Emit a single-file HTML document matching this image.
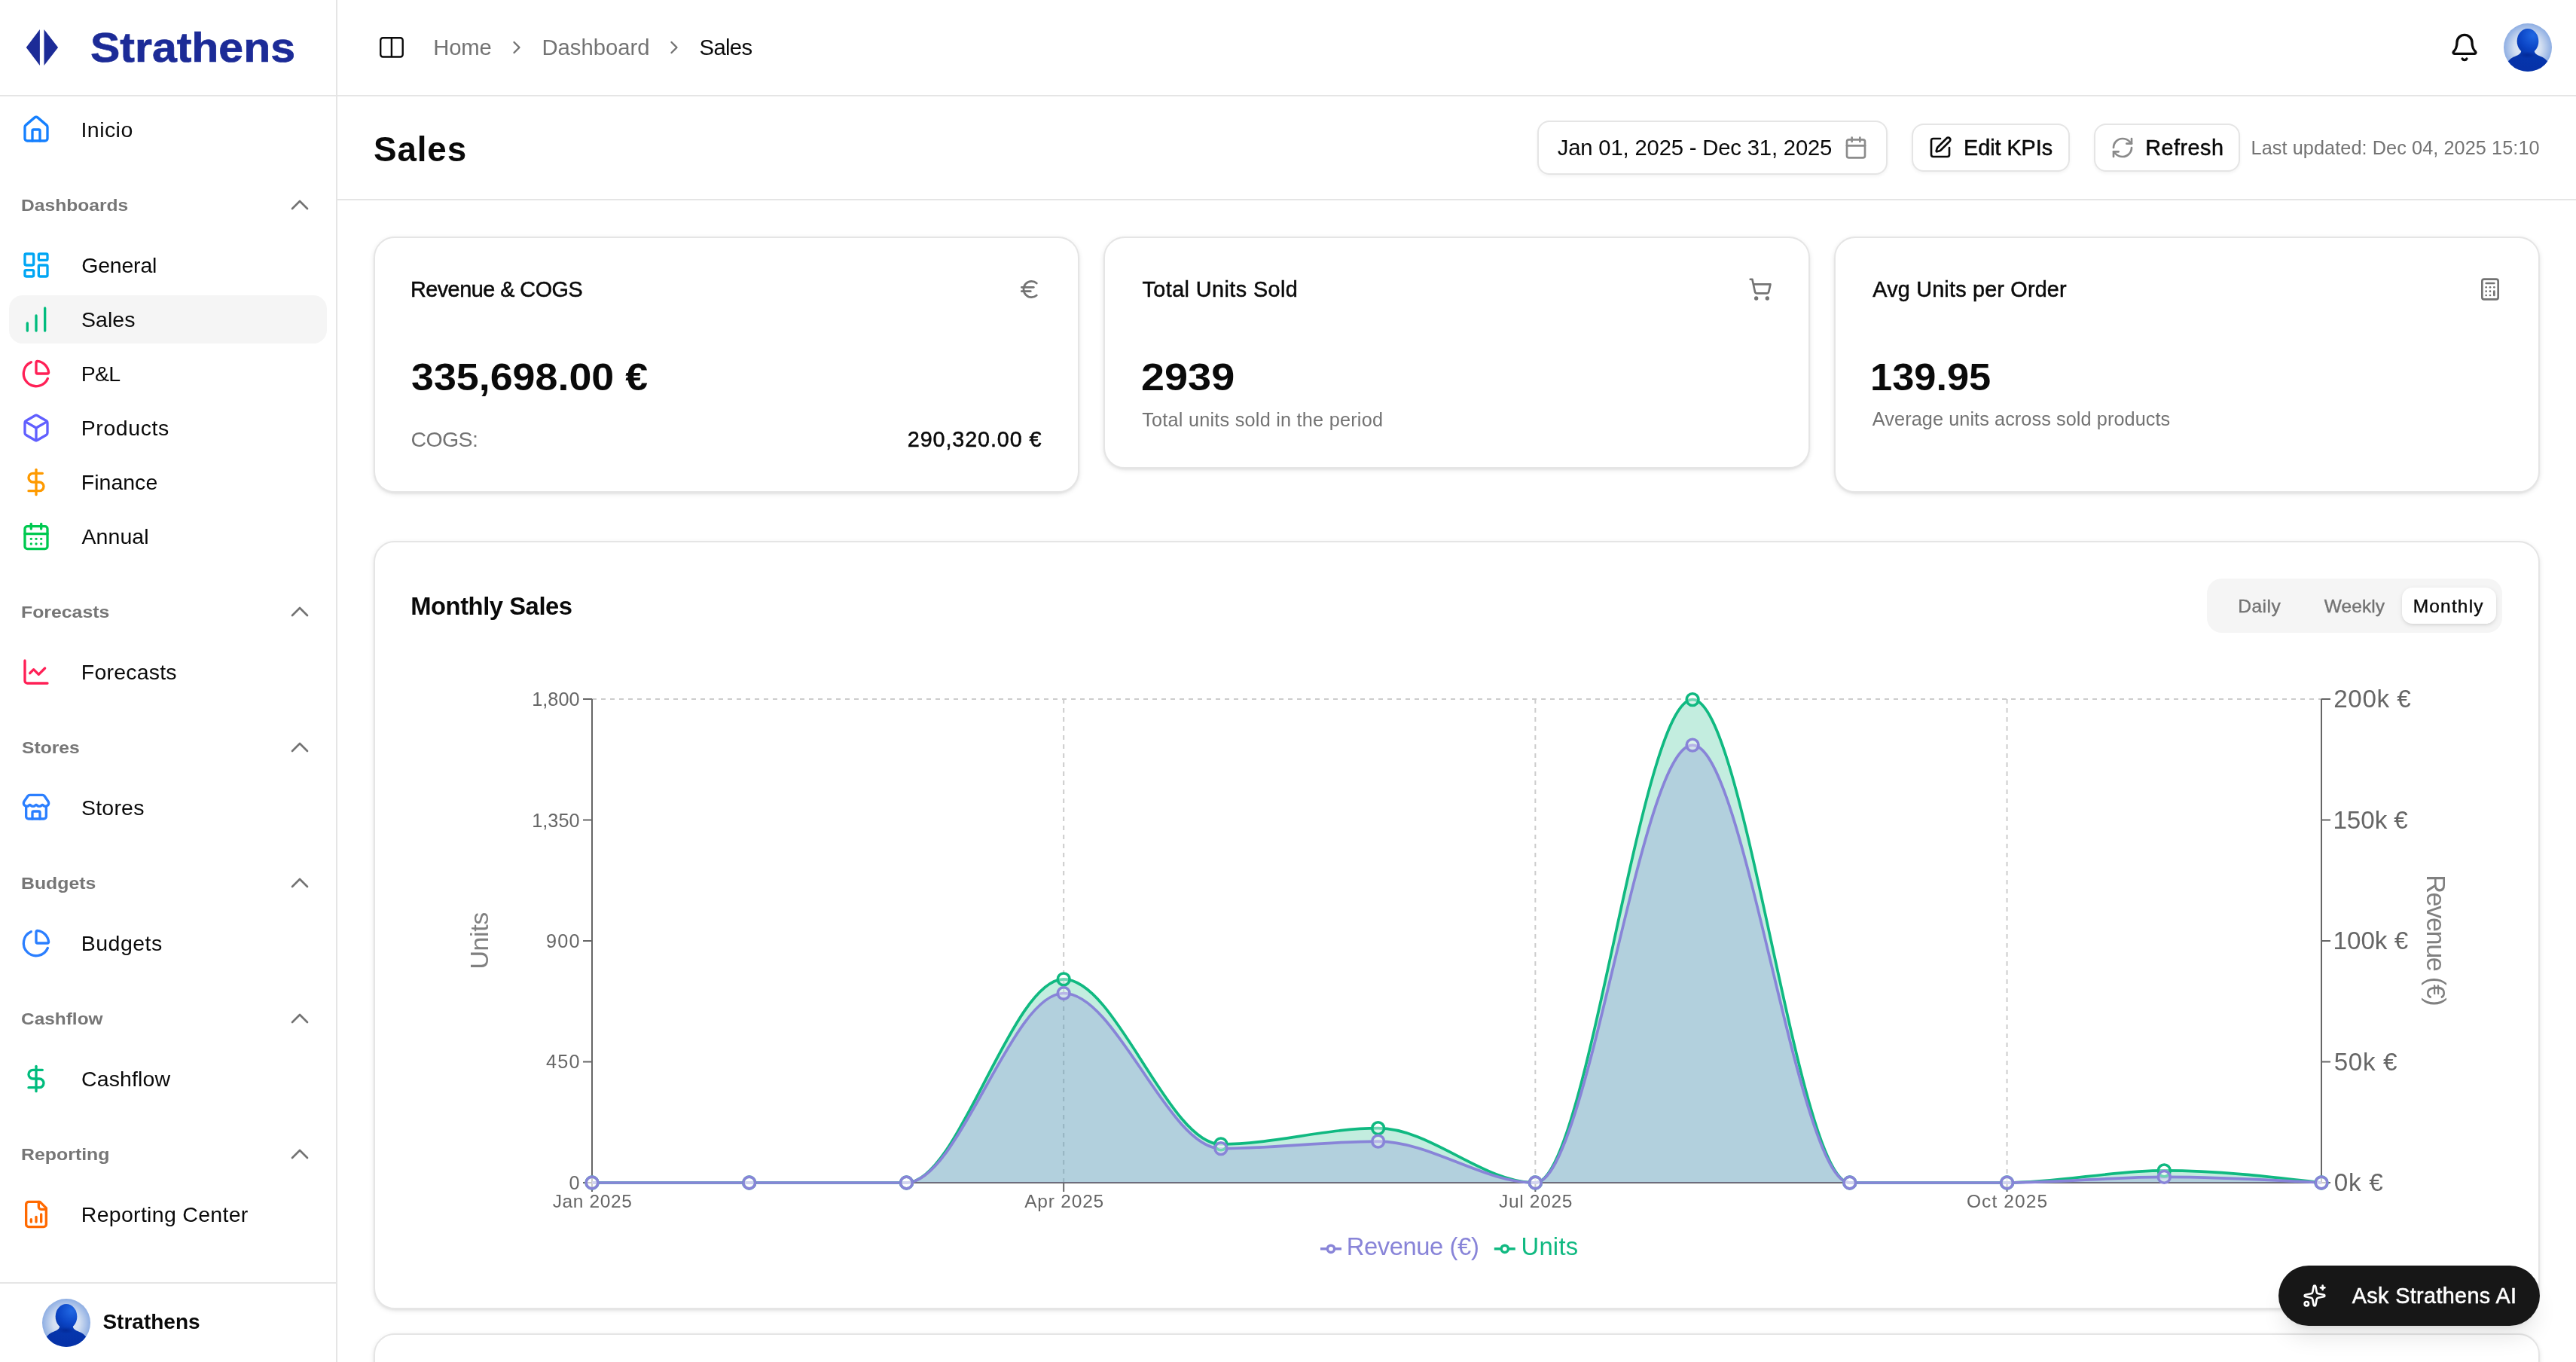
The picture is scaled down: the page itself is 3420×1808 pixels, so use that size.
<!DOCTYPE html>
<html lang="en"><head><meta charset="utf-8"><title>Sales - Strathens</title><style>
*{box-sizing:border-box;margin:0;padding:0}
html,body{width:3420px;height:1808px;overflow:hidden;background:#fff}
#root{position:absolute;left:0;top:0;width:3420px;height:1808px;overflow:hidden;transform:translateZ(0)}
body{position:relative;font-family:"Liberation Sans",sans-serif;-webkit-font-smoothing:antialiased}
.t{position:absolute;white-space:nowrap;display:block}
.i{position:absolute;display:block;overflow:visible}
.sb{position:absolute;left:0;top:0;width:448px;height:1808px;border-right:2px solid #e5e5e5}
.hl{position:absolute;height:2px;background:#e5e5e5}
.act{position:absolute;left:12px;width:422px;height:64px;border-radius:18px;background:#f5f5f5}
.btn{position:absolute;border:2px solid #e5e5e5;background:#fff;box-shadow:0 2px 4px rgba(0,0,0,.05)}
.card{position:absolute;border:2px solid #e5e5e5;border-radius:28px;background:#fff;box-shadow:0 2px 6px rgba(0,0,0,.10),0 2px 4px -2px rgba(0,0,0,.10)}
.tabs{position:absolute;left:2930px;top:768px;width:392px;height:72px;border-radius:20px;background:#f5f5f5}
.pill{position:absolute;left:3189px;top:780px;width:125px;height:48px;border-radius:14px;background:#fff;box-shadow:0 2px 6px rgba(0,0,0,.10),0 2px 4px -2px rgba(0,0,0,.10)}
.ask{position:absolute;left:3025px;top:1680px;width:347px;height:80px;border-radius:40px;background:#171717;box-shadow:0 20px 30px -6px rgba(0,0,0,.10),0 8px 12px -8px rgba(0,0,0,.10)}
</style></head><body>
<div id="root">
<div class="sb"></div>
<div class="hl" style="left:0;top:126px;width:3420px"></div>
<div class="hl" style="left:448px;top:264px;width:2972px"></div>
<div class="hl" style="left:0;top:1702px;width:446px"></div>
<aside>
<svg class="i" style="left:34px;top:38px" width="44" height="50" viewBox="34 38 44 50"><path d="M52.900 38.900 L52.900 87.100 L34.750 63 Z" fill="#1c2b97"/><path d="M58.500 38.900 L58.500 87.100 L77.100 63 Z" fill="#1c2b97"/></svg>
<span class="t" style="left:119.69px;top:36px;font-size:55.50px;line-height:55.50px;color:#1c2b97;font-weight:700;transform-origin:0 50%;transform:scaleX(1.0623);-webkit-text-stroke:0.7px #1c2b97;">Strathens</span>
<svg class="i" style="left:28px;top:152px;" width="40" height="40" viewBox="0 0 24 24" fill="none" stroke="#1580ff" stroke-width="2" stroke-linecap="round" stroke-linejoin="round"><path d="M15 21v-8a1 1 0 0 0-1-1h-4a1 1 0 0 0-1 1v8"/><path d="M3 10a2 2 0 0 1 .709-1.528l7-5.999a2 2 0 0 1 2.582 0l7 5.999A2 2 0 0 1 21 10v9a2 2 0 0 1-2 2H5a2 2 0 0 1-2-2z"/></svg>
<span class="t" style="left:107.48px;top:158px;font-size:28.50px;line-height:28.50px;color:#0a0a0a;letter-spacing:0.450px;">Inicio</span>
<span class="t" style="left:27.68px;top:261px;font-size:22.75px;line-height:22.75px;color:#767676;font-weight:700;transform-origin:0 50%;transform:scaleX(1.0816);">Dashboards</span>
<svg class="i" style="left:378px;top:252px;" width="40" height="40" viewBox="0 0 24 24" fill="none" stroke="#737373" stroke-width="1.6" stroke-linecap="round" stroke-linejoin="round"><path d="m18 15-6-6-6 6"/></svg>
<svg class="i" style="left:28px;top:332px;" width="40" height="40" viewBox="0 0 24 24" fill="none" stroke="#00a6f4" stroke-width="2" stroke-linecap="round" stroke-linejoin="round"><rect width="7" height="9" x="3" y="3" rx="1"/><rect width="7" height="5" x="14" y="3" rx="1"/><rect width="7" height="9" x="14" y="12" rx="1"/><rect width="7" height="5" x="3" y="16" rx="1"/></svg>
<span class="t" style="left:108.28px;top:338px;font-size:28.50px;line-height:28.50px;color:#0a0a0a;letter-spacing:-0.216px;">General</span>
<div class="act" style="top:392px"></div>
<svg class="i" style="left:28px;top:404px;" width="40" height="40" viewBox="0 0 24 24" fill="none" stroke="#00bc7d" stroke-width="2" stroke-linecap="round" stroke-linejoin="round"><path d="M5 21v-6"/><path d="M12 21V9"/><path d="M19 21V3"/></svg>
<span class="t" style="left:108.02px;top:410px;font-size:28.50px;line-height:28.50px;color:#0a0a0a;letter-spacing:0.028px;">Sales</span>
<svg class="i" style="left:28px;top:476px;" width="40" height="40" viewBox="0 0 24 24" fill="none" stroke="#ff2056" stroke-width="2" stroke-linecap="round" stroke-linejoin="round"><path d="M21 12c.552 0 1.005-.449.95-.998a10 10 0 0 0-8.953-8.951c-.55-.055-.998.398-.998.95v8a1 1 0 0 0 1 1z"/><path d="M21.21 15.89A10 10 0 1 1 8 2.83"/></svg>
<span class="t" style="left:107.76px;top:482px;font-size:28.50px;line-height:28.50px;color:#0a0a0a;letter-spacing:-0.697px;">P&amp;L</span>
<svg class="i" style="left:28px;top:548px;" width="40" height="40" viewBox="0 0 24 24" fill="none" stroke="#615fff" stroke-width="2" stroke-linecap="round" stroke-linejoin="round"><path d="M21 8a2 2 0 0 0-1-1.730l-7-4a2 2 0 0 0-2 0l-7 4A2 2 0 0 0 3 8v8a2 2 0 0 0 1 1.730l7 4a2 2 0 0 0 2 0l7-4A2 2 0 0 0 21 16Z"/><path d="m3.300 7 8.700 5 8.700-5"/><path d="M12 22V12"/></svg>
<span class="t" style="left:107.76px;top:554px;font-size:28.50px;line-height:28.50px;color:#0a0a0a;letter-spacing:0.583px;">Products</span>
<svg class="i" style="left:28px;top:620px;" width="40" height="40" viewBox="0 0 24 24" fill="none" stroke="#fe9a00" stroke-width="2" stroke-linecap="round" stroke-linejoin="round"><line x1="12" x2="12" y1="2" y2="22"/><path d="M17 5H9.500a3.500 3.500 0 0 0 0 7h5a3.500 3.500 0 0 1 0 7H6"/></svg>
<span class="t" style="left:107.76px;top:626px;font-size:28.50px;line-height:28.50px;color:#0a0a0a;letter-spacing:0.015px;">Finance</span>
<svg class="i" style="left:28px;top:692px;" width="40" height="40" viewBox="0 0 24 24" fill="none" stroke="#00c950" stroke-width="2" stroke-linecap="round" stroke-linejoin="round"><path d="M8 2v4"/><path d="M16 2v4"/><rect width="18" height="18" x="3" y="4" rx="2"/><path d="M3 10h18"/><path d="M8 14h.01"/><path d="M12 14h.01"/><path d="M16 14h.01"/><path d="M8 18h.01"/><path d="M12 18h.01"/><path d="M16 18h.01"/></svg>
<span class="t" style="left:108.54px;top:698px;font-size:28.50px;line-height:28.50px;color:#0a0a0a;letter-spacing:0.059px;">Annual</span>
<span class="t" style="left:27.66px;top:801px;font-size:22.75px;line-height:22.75px;color:#767676;font-weight:700;transform-origin:0 50%;transform:scaleX(1.0915);">Forecasts</span>
<svg class="i" style="left:378px;top:792px;" width="40" height="40" viewBox="0 0 24 24" fill="none" stroke="#737373" stroke-width="1.6" stroke-linecap="round" stroke-linejoin="round"><path d="m18 15-6-6-6 6"/></svg>
<svg class="i" style="left:28px;top:872px;" width="40" height="40" viewBox="0 0 24 24" fill="none" stroke="#ff2056" stroke-width="2" stroke-linecap="round" stroke-linejoin="round"><path d="M3 3v16a2 2 0 0 0 2 2h16"/><path d="m19 9-5 5-4-4-3 3"/></svg>
<span class="t" style="left:107.76px;top:878px;font-size:28.50px;line-height:28.50px;color:#0a0a0a;letter-spacing:0.217px;">Forecasts</span>
<span class="t" style="left:28.61px;top:981px;font-size:22.75px;line-height:22.75px;color:#767676;font-weight:700;transform-origin:0 50%;transform:scaleX(1.0828);">Stores</span>
<svg class="i" style="left:378px;top:972px;" width="40" height="40" viewBox="0 0 24 24" fill="none" stroke="#737373" stroke-width="1.6" stroke-linecap="round" stroke-linejoin="round"><path d="m18 15-6-6-6 6"/></svg>
<svg class="i" style="left:28px;top:1052px;" width="40" height="40" viewBox="0 0 24 24" fill="none" stroke="#2b7fff" stroke-width="2" stroke-linecap="round" stroke-linejoin="round"><path d="M15 21v-5a1 1 0 0 0-1-1h-4a1 1 0 0 0-1 1v5"/><path d="M17.774 10.310a1.120 1.120 0 0 0-1.549 0 2.500 2.500 0 0 1-3.451 0 1.120 1.120 0 0 0-1.548 0 2.500 2.500 0 0 1-3.452 0 1.120 1.120 0 0 0-1.549 0 2.500 2.500 0 0 1-3.770-3.248l2.889-4.184A2 2 0 0 1 7 2h10a2 2 0 0 1 1.653.873l2.895 4.192a2.500 2.500 0 0 1-3.774 3.244"/><path d="M4 10.950V19a2 2 0 0 0 2 2h12a2 2 0 0 0 2-2v-8.050"/></svg>
<span class="t" style="left:108.02px;top:1058px;font-size:28.50px;line-height:28.50px;color:#0a0a0a;letter-spacing:0.207px;">Stores</span>
<span class="t" style="left:27.66px;top:1161px;font-size:22.75px;line-height:22.75px;color:#767676;font-weight:700;transform-origin:0 50%;transform:scaleX(1.0905);">Budgets</span>
<svg class="i" style="left:378px;top:1152px;" width="40" height="40" viewBox="0 0 24 24" fill="none" stroke="#737373" stroke-width="1.6" stroke-linecap="round" stroke-linejoin="round"><path d="m18 15-6-6-6 6"/></svg>
<svg class="i" style="left:28px;top:1232px;" width="40" height="40" viewBox="0 0 24 24" fill="none" stroke="#2b7fff" stroke-width="2" stroke-linecap="round" stroke-linejoin="round"><path d="M21 12c.552 0 1.005-.449.95-.998a10 10 0 0 0-8.953-8.951c-.55-.055-.998.398-.998.95v8a1 1 0 0 0 1 1z"/><path d="M21.21 15.89A10 10 0 1 1 8 2.83"/></svg>
<span class="t" style="left:107.76px;top:1238px;font-size:28.50px;line-height:28.50px;color:#0a0a0a;letter-spacing:0.478px;">Budgets</span>
<span class="t" style="left:28.30px;top:1341px;font-size:22.75px;line-height:22.75px;color:#767676;font-weight:700;transform-origin:0 50%;transform:scaleX(1.0737);">Cashflow</span>
<svg class="i" style="left:378px;top:1332px;" width="40" height="40" viewBox="0 0 24 24" fill="none" stroke="#737373" stroke-width="1.6" stroke-linecap="round" stroke-linejoin="round"><path d="m18 15-6-6-6 6"/></svg>
<svg class="i" style="left:28px;top:1412px;" width="40" height="40" viewBox="0 0 24 24" fill="none" stroke="#00bc7d" stroke-width="2" stroke-linecap="round" stroke-linejoin="round"><line x1="12" x2="12" y1="2" y2="22"/><path d="M17 5H9.500a3.500 3.500 0 0 0 0 7h5a3.500 3.500 0 0 1 0 7H6"/></svg>
<span class="t" style="left:108.08px;top:1418px;font-size:28.50px;line-height:28.50px;color:#0a0a0a;letter-spacing:0.110px;">Cashflow</span>
<span class="t" style="left:27.66px;top:1521px;font-size:22.75px;line-height:22.75px;color:#767676;font-weight:700;transform-origin:0 50%;transform:scaleX(1.0939);">Reporting</span>
<svg class="i" style="left:378px;top:1512px;" width="40" height="40" viewBox="0 0 24 24" fill="none" stroke="#737373" stroke-width="1.6" stroke-linecap="round" stroke-linejoin="round"><path d="m18 15-6-6-6 6"/></svg>
<svg class="i" style="left:28px;top:1592px;" width="40" height="40" viewBox="0 0 24 24" fill="none" stroke="#ff6900" stroke-width="2" stroke-linecap="round" stroke-linejoin="round"><path d="M15 2H6a2 2 0 0 0-2 2v16a2 2 0 0 0 2 2h12a2 2 0 0 0 2-2V7Z"/><path d="M14 2v4a2 2 0 0 0 2 2h4"/><path d="M8 18v-2"/><path d="M12 18v-4"/><path d="M16 18v-6"/></svg>
<span class="t" style="left:107.76px;top:1598px;font-size:28.50px;line-height:28.50px;color:#0a0a0a;letter-spacing:0.303px;">Reporting Center</span>
<svg class="i" style="left:56px;top:1724px" width="64" height="64" viewBox="0 0 64 64"><defs><radialGradient id="ag" cx="50%" cy="50%" r="50%"><stop offset="0" stop-color="#eef2f9"/><stop offset="0.55" stop-color="#d3dff1"/><stop offset="1" stop-color="#8eaee3"/></radialGradient><radialGradient id="ah" gradientUnits="userSpaceOnUse" cx="39" cy="16" r="44"><stop offset="0" stop-color="#2168e3"/><stop offset="0.4" stop-color="#0b45c6"/><stop offset="0.62" stop-color="#0536ad"/><stop offset="1" stop-color="#0632a8"/></radialGradient><radialGradient id="as" cx="50%" cy="50%" r="50%"><stop offset="0" stop-color="#011f86" stop-opacity="0.55"/><stop offset="1" stop-color="#011f86" stop-opacity="0"/></radialGradient><clipPath id="ac"><circle cx="32" cy="32" r="32"/></clipPath></defs><circle cx="32" cy="32" r="32" fill="url(#ag)"/><g clip-path="url(#ac)" fill="url(#ah)"><ellipse cx="32" cy="23.700" rx="14.350" ry="16.600"/><path d="M23.500 34 C23.500 40 21 41.500 14.700 44 C9.500 46.200 6 49 4 54 L4 66 L60 66 L60 54 C58 49 54.500 46.200 49.300 44 C43 41.500 40.500 40 40.500 34 Z"/><ellipse cx="31.500" cy="42" rx="11" ry="4.500" fill="url(#as)"/></g></svg>
<span class="t" style="left:136.42px;top:1741px;font-size:28.00px;line-height:28.00px;color:#0a0a0a;font-weight:700;letter-spacing:0.007px;">Strathens</span>
</aside>
<header>
<svg class="i" style="left:504px;top:49px" width="32" height="28" viewBox="0 0 32 28" fill="none" stroke="#0a0a0a" stroke-width="2.400"><rect x="1.200" y="1.200" width="29.500" height="25.300" rx="3.200"/><path d="M15.900 1.200v25.300"/></svg>
<span class="t" style="left:575.20px;top:49px;font-size:29.25px;line-height:29.25px;color:#737373;letter-spacing:-0.114px;">Home</span>
<svg class="i" style="left:671.7px;top:49px;" width="28" height="28" viewBox="0 0 24 24" fill="none" stroke="#737373" stroke-width="2" stroke-linecap="round" stroke-linejoin="round"><path d="m9 18 6-6-6-6"/></svg>
<span class="t" style="left:719.40px;top:49px;font-size:29.25px;line-height:29.25px;color:#737373;letter-spacing:0.010px;">Dashboard</span>
<svg class="i" style="left:880.8px;top:49px;" width="28" height="28" viewBox="0 0 24 24" fill="none" stroke="#737373" stroke-width="2" stroke-linecap="round" stroke-linejoin="round"><path d="m9 18 6-6-6-6"/></svg>
<span class="t" style="left:928.58px;top:49px;font-size:29.25px;line-height:29.25px;color:#0a0a0a;letter-spacing:-0.676px;">Sales</span>
<svg class="i" style="left:3252px;top:43px;" width="40" height="40" viewBox="0 0 24 24" fill="none" stroke="#0a0a0a" stroke-width="2" stroke-linecap="round" stroke-linejoin="round"><path d="M10.268 21a2 2 0 0 0 3.464 0"/><path d="M3.262 15.326A1 1 0 0 0 4 17h16a1 1 0 0 0 .740-1.673C19.410 13.956 18 12.499 18 8A6 6 0 0 0 6 8c0 4.499-1.411 5.956-2.738 7.326"/></svg>
<svg class="i" style="left:3324px;top:31px" width="64" height="64" viewBox="0 0 64 64"><defs><radialGradient id="bg" cx="50%" cy="50%" r="50%"><stop offset="0" stop-color="#eef2f9"/><stop offset="0.55" stop-color="#d3dff1"/><stop offset="1" stop-color="#8eaee3"/></radialGradient><radialGradient id="bh" gradientUnits="userSpaceOnUse" cx="39" cy="16" r="44"><stop offset="0" stop-color="#2168e3"/><stop offset="0.4" stop-color="#0b45c6"/><stop offset="0.62" stop-color="#0536ad"/><stop offset="1" stop-color="#0632a8"/></radialGradient><radialGradient id="bs" cx="50%" cy="50%" r="50%"><stop offset="0" stop-color="#011f86" stop-opacity="0.55"/><stop offset="1" stop-color="#011f86" stop-opacity="0"/></radialGradient><clipPath id="bc"><circle cx="32" cy="32" r="32"/></clipPath></defs><circle cx="32" cy="32" r="32" fill="url(#bg)"/><g clip-path="url(#bc)" fill="url(#bh)"><ellipse cx="32" cy="23.700" rx="14.350" ry="16.600"/><path d="M23.500 34 C23.500 40 21 41.500 14.700 44 C9.500 46.200 6 49 4 54 L4 66 L60 66 L60 54 C58 49 54.500 46.200 49.300 44 C43 41.500 40.500 40 40.500 34 Z"/><ellipse cx="31.500" cy="42" rx="11" ry="4.500" fill="url(#bs)"/></g></svg>
</header>
<main>
<section>
<span class="t" style="left:496.12px;top:176px;font-size:45.75px;line-height:45.75px;color:#0a0a0a;font-weight:700;letter-spacing:0.864px;">Sales</span>
<div class="btn" style="left:2041px;top:160px;width:465px;height:72px;border-radius:16px"></div>
<span class="t" style="left:2067.76px;top:182px;font-size:29.25px;line-height:29.25px;color:#0a0a0a;letter-spacing:-0.173px;">Jan 01, 2025 - Dec 31, 2025</span>
<svg class="i" style="left:2448px;top:180px;" width="32" height="32" viewBox="0 0 24 24" fill="none" stroke="#8c8c8c" stroke-width="2" stroke-linecap="round" stroke-linejoin="round"><path d="M8 2v4"/><path d="M16 2v4"/><rect width="18" height="18" x="3" y="4" rx="2"/><path d="M3 10h18"/></svg>
<div class="btn" style="left:2538px;top:164px;width:210px;height:64px;border-radius:16px"></div>
<svg class="i" style="left:2560px;top:180px;" width="32" height="32" viewBox="0 0 24 24" fill="none" stroke="#0a0a0a" stroke-width="2" stroke-linecap="round" stroke-linejoin="round"><path d="M12 3H5a2 2 0 0 0-2 2v14a2 2 0 0 0 2 2h14a2 2 0 0 0 2-2v-7"/><path d="M18.375 2.625a1 1 0 0 1 3 3l-9.013 9.014a2 2 0 0 1-.853.505l-2.873.840a.500.500 0 0 1-.620-.620l.840-2.873a2 2 0 0 1 .506-.852z"/></svg>
<span class="t" style="left:2607.04px;top:182px;font-size:28.75px;line-height:28.75px;color:#0a0a0a;letter-spacing:-0.032px;-webkit-text-stroke:0.5px #0a0a0a;">Edit KPIs</span>
<div class="btn" style="left:2780px;top:164px;width:194px;height:64px;border-radius:16px"></div>
<svg class="i" style="left:2802px;top:180px;" width="32" height="32" viewBox="0 0 24 24" fill="none" stroke="#8a8a8a" stroke-width="2" stroke-linecap="round" stroke-linejoin="round"><path d="M3 12a9 9 0 0 1 9-9 9.750 9.750 0 0 1 6.740 2.740L21 8"/><path d="M21 3v5h-5"/><path d="M21 12a9 9 0 0 1-9 9 9.750 9.750 0 0 1-6.740-2.740L3 16"/><path d="M8 16H3v5"/></svg>
<span class="t" style="left:2848.14px;top:182px;font-size:28.75px;line-height:28.75px;color:#0a0a0a;letter-spacing:0.522px;-webkit-text-stroke:0.5px #0a0a0a;">Refresh</span>
<span class="t" style="left:2988.53px;top:184px;font-size:25.25px;line-height:25.25px;color:#737373;letter-spacing:0.086px;">Last updated: Dec 04, 2025 15:10</span>
</section>
<section>
<div class="card" style="left:496px;top:314px;width:937.33px;height:340px"></div>
<div class="card" style="left:1465.33px;top:314px;width:937.33px;height:308px"></div>
<div class="card" style="left:2434.67px;top:314px;width:937.33px;height:340px"></div>
<span class="t" style="left:544.94px;top:370px;font-size:28.75px;line-height:28.75px;color:#0a0a0a;letter-spacing:-0.481px;-webkit-text-stroke:0.5px #0a0a0a;">Revenue &amp; COGS</span>
<svg class="i" style="left:1351.3px;top:368px;" width="32" height="32" viewBox="0 0 24 24" fill="none" stroke="#737373" stroke-width="2" stroke-linecap="round" stroke-linejoin="round"><path d="M4 10h12"/><path d="M4 14h9"/><path d="M19 6a7.700 7.700 0 0 0-5.200-2A7.900 7.900 0 0 0 6 12c0 4.400 3.500 8 7.800 8 2 0 3.800-.800 5.200-2"/></svg>
<span class="t" style="left:545.62px;top:477px;font-size:49.75px;line-height:49.75px;color:#0a0a0a;font-weight:700;transform-origin:0 50%;transform:scaleX(1.0813);">335,698.00 €</span>
<span class="t" style="left:545.38px;top:569px;font-size:28.50px;line-height:28.50px;color:#737373;letter-spacing:-0.561px;">COGS:</span>
<span class="t" style="left:1204.76px;top:569px;font-size:28.75px;line-height:28.75px;color:#0a0a0a;letter-spacing:0.888px;-webkit-text-stroke:0.5px #0a0a0a;">290,320.00 €</span>
<span class="t" style="left:1516.57px;top:370px;font-size:28.75px;line-height:28.75px;color:#0a0a0a;letter-spacing:0.428px;-webkit-text-stroke:0.5px #0a0a0a;">Total Units Sold</span>
<svg class="i" style="left:2320.7px;top:368px;" width="32" height="32" viewBox="0 0 24 24" fill="none" stroke="#737373" stroke-width="2" stroke-linecap="round" stroke-linejoin="round"><circle cx="8" cy="21" r="1"/><circle cx="19" cy="21" r="1"/><path d="M2.050 2.050h2l2.660 12.420a2 2 0 0 0 2 1.580h9.780a2 2 0 0 0 1.950-1.570l1.650-7.430H5.120"/></svg>
<span class="t" style="left:1514.80px;top:477px;font-size:49.75px;line-height:49.75px;color:#0a0a0a;font-weight:700;transform-origin:0 50%;transform:scaleX(1.1222);">2939</span>
<span class="t" style="left:1516.14px;top:545px;font-size:25.25px;line-height:25.25px;color:#737373;letter-spacing:0.237px;">Total units sold in the period</span>
<span class="t" style="left:2486.34px;top:370px;font-size:28.75px;line-height:28.75px;color:#0a0a0a;letter-spacing:0.210px;-webkit-text-stroke:0.5px #0a0a0a;">Avg Units per Order</span>
<svg class="i" style="left:3290px;top:368px;" width="32" height="32" viewBox="0 0 24 24" fill="none" stroke="#737373" stroke-width="2" stroke-linecap="round" stroke-linejoin="round"><rect width="16" height="20" x="4" y="2" rx="2"/><line x1="8" x2="16" y1="6" y2="6"/><line x1="16" x2="16" y1="14" y2="18"/><path d="M16 10h.01"/><path d="M12 10h.01"/><path d="M8 10h.01"/><path d="M12 14h.01"/><path d="M8 14h.01"/><path d="M12 18h.01"/><path d="M8 18h.01"/></svg>
<span class="t" style="left:2482.65px;top:477px;font-size:49.75px;line-height:49.75px;color:#0a0a0a;font-weight:700;transform-origin:0 50%;transform:scaleX(1.0532);">139.95</span>
<span class="t" style="left:2485.85px;top:544px;font-size:25.25px;line-height:25.25px;color:#737373;letter-spacing:0.086px;">Average units across sold products</span>
</section>
<section>
<div class="card" style="left:496px;top:718px;width:2876px;height:1020px"></div>
<span class="t" style="left:545.24px;top:789px;font-size:32.75px;line-height:32.75px;color:#0a0a0a;font-weight:700;letter-spacing:-0.452px;">Monthly Sales</span>
<div class="tabs"></div><div class="pill"></div>
<span class="t" style="left:2971.19px;top:793px;font-size:24.50px;line-height:24.50px;color:#737373;letter-spacing:0.522px;-webkit-text-stroke:0.4px #737373;">Daily</span>
<span class="t" style="left:3085.70px;top:793px;font-size:24.50px;line-height:24.50px;color:#737373;letter-spacing:0.111px;-webkit-text-stroke:0.4px #737373;">Weekly</span>
<span class="t" style="left:3203.69px;top:793px;font-size:24.50px;line-height:24.50px;color:#0a0a0a;letter-spacing:1.177px;-webkit-text-stroke:0.4px #0a0a0a;">Monthly</span>
<svg class="i" style="left:0;top:0" width="3420" height="1808" viewBox="0 0 3420 1808"><g stroke="#cccccc" stroke-width="2" stroke-dasharray="6 6" fill="none"><path d="M786.0,928.0H3082.0"/><path d="M1412.18,928.0V1570.0"/><path d="M2038.36,928.0V1570.0"/><path d="M2664.55,928.0V1570.0"/></g><path d="M786.00,1570.00C855.58,1570.00,925.15,1570.00,994.73,1570.00C1064.30,1570.00,1133.88,1570.00,1203.45,1570.00C1273.03,1570.00,1342.61,1299.90,1412.18,1299.90C1481.76,1299.90,1551.33,1518.90,1620.91,1518.90C1690.48,1518.90,1760.06,1497.70,1829.64,1497.70C1899.21,1497.70,1968.79,1570.00,2038.36,1570.00C2107.94,1570.00,2177.52,928.60,2247.09,928.60C2316.67,928.60,2386.24,1570.00,2455.82,1570.00C2525.39,1570.00,2594.97,1570.00,2664.55,1570.00C2734.12,1570.00,2803.70,1553.90,2873.27,1553.90C2942.85,1553.90,3012.42,1561.95,3082.00,1570.00L3082.0,1570.0L786.0,1570.0Z" fill="#10b981" fill-opacity="0.25"/><path d="M786.00,1570.00C855.58,1570.00,925.15,1570.00,994.73,1570.00C1064.30,1570.00,1133.88,1570.00,1203.45,1570.00C1273.03,1570.00,1342.61,1299.90,1412.18,1299.90C1481.76,1299.90,1551.33,1518.90,1620.91,1518.90C1690.48,1518.90,1760.06,1497.70,1829.64,1497.70C1899.21,1497.70,1968.79,1570.00,2038.36,1570.00C2107.94,1570.00,2177.52,928.60,2247.09,928.60C2316.67,928.60,2386.24,1570.00,2455.82,1570.00C2525.39,1570.00,2594.97,1570.00,2664.55,1570.00C2734.12,1570.00,2803.70,1553.90,2873.27,1553.90C2942.85,1553.90,3012.42,1561.95,3082.00,1570.00" fill="none" stroke="#10b981" stroke-width="3.700"/><g stroke="#666666" stroke-width="2" fill="none"><path d="M786.0,928.0V1570.0"/><path d="M3082.0,928.0V1570.0"/><path d="M786.0,1570.0H3082.0"/><path d="M774.0,1570.00H786.0"/><path d="M3082.0,1570.00H3094.0"/><path d="M774.0,1409.50H786.0"/><path d="M3082.0,1409.50H3094.0"/><path d="M774.0,1249.00H786.0"/><path d="M3082.0,1249.00H3094.0"/><path d="M774.0,1088.50H786.0"/><path d="M3082.0,1088.50H3094.0"/><path d="M774.0,928.00H786.0"/><path d="M3082.0,928.00H3094.0"/><path d="M786.00,1570.0v12"/><path d="M1412.18,1570.0v12"/><path d="M2038.36,1570.0v12"/><path d="M2664.55,1570.0v12"/></g><path d="M786.00,1570.00C855.58,1570.00,925.15,1570.00,994.73,1570.00C1064.30,1570.00,1133.88,1570.00,1203.45,1570.00C1273.03,1570.00,1342.61,1318.50,1412.18,1318.50C1481.76,1318.50,1551.33,1524.60,1620.91,1524.60C1690.48,1524.60,1760.06,1515.10,1829.64,1515.10C1899.21,1515.10,1968.79,1570.00,2038.36,1570.00C2107.94,1570.00,2177.52,989.10,2247.09,989.10C2316.67,989.10,2386.24,1570.00,2455.82,1570.00C2525.39,1570.00,2594.97,1570.00,2664.55,1570.00C2734.12,1570.00,2803.70,1562.40,2873.27,1562.40C2942.85,1562.40,3012.42,1566.20,3082.00,1570.00L3082.0,1570.0L786.0,1570.0Z" fill="#8884d8" fill-opacity="0.28"/><path d="M786.00,1570.00C855.58,1570.00,925.15,1570.00,994.73,1570.00C1064.30,1570.00,1133.88,1570.00,1203.45,1570.00C1273.03,1570.00,1342.61,1318.50,1412.18,1318.50C1481.76,1318.50,1551.33,1524.60,1620.91,1524.60C1690.48,1524.60,1760.06,1515.10,1829.64,1515.10C1899.21,1515.10,1968.79,1570.00,2038.36,1570.00C2107.94,1570.00,2177.52,989.10,2247.09,989.10C2316.67,989.10,2386.24,1570.00,2455.82,1570.00C2525.39,1570.00,2594.97,1570.00,2664.55,1570.00C2734.12,1570.00,2803.70,1562.40,2873.27,1562.40C2942.85,1562.40,3012.42,1566.20,3082.00,1570.00" fill="none" stroke="#8884d8" stroke-width="3.700"/><g fill="#ffffff" fill-opacity="0.4" stroke="#10b981" stroke-width="3.600"><circle cx="786.00" cy="1570.00" r="7.900"/><circle cx="994.73" cy="1570.00" r="7.900"/><circle cx="1203.45" cy="1570.00" r="7.900"/><circle cx="1412.18" cy="1299.90" r="7.900"/><circle cx="1620.91" cy="1518.90" r="7.900"/><circle cx="1829.64" cy="1497.70" r="7.900"/><circle cx="2038.36" cy="1570.00" r="7.900"/><circle cx="2247.09" cy="928.60" r="7.900"/><circle cx="2455.82" cy="1570.00" r="7.900"/><circle cx="2664.55" cy="1570.00" r="7.900"/><circle cx="2873.27" cy="1553.90" r="7.900"/><circle cx="3082.00" cy="1570.00" r="7.900"/></g><g fill="#ffffff" fill-opacity="0.4" stroke="#8884d8" stroke-width="3.600"><circle cx="786.00" cy="1570.00" r="7.900"/><circle cx="994.73" cy="1570.00" r="7.900"/><circle cx="1203.45" cy="1570.00" r="7.900"/><circle cx="1412.18" cy="1318.50" r="7.900"/><circle cx="1620.91" cy="1524.60" r="7.900"/><circle cx="1829.64" cy="1515.10" r="7.900"/><circle cx="2038.36" cy="1570.00" r="7.900"/><circle cx="2247.09" cy="989.10" r="7.900"/><circle cx="2455.82" cy="1570.00" r="7.900"/><circle cx="2664.55" cy="1570.00" r="7.900"/><circle cx="2873.27" cy="1562.40" r="7.900"/><circle cx="3082.00" cy="1570.00" r="7.900"/></g><path transform="translate(1753,1643.8) scale(0.875)" fill="none" stroke="#8884d8" stroke-width="4" d="M0,16h10.667A5.333,5.333,0,1,1,21.333,16H32M21.333,16A5.333,5.333,0,1,1,10.667,16"/><path transform="translate(1983.8,1643.8) scale(0.875)" fill="none" stroke="#10b981" stroke-width="4" d="M0,16h10.667A5.333,5.333,0,1,1,21.333,16H32M21.333,16A5.333,5.333,0,1,1,10.667,16"/></svg>
<span class="t" style="left:755.52px;top:1558px;font-size:25.25px;line-height:25.25px;color:#666666;">0</span>
<span class="t" style="left:725.04px;top:1397px;font-size:25.25px;line-height:25.25px;color:#666666;letter-spacing:1.189px;">450</span>
<span class="t" style="left:724.94px;top:1237px;font-size:25.25px;line-height:25.25px;color:#666666;letter-spacing:1.242px;">900</span>
<span class="t" style="left:706.18px;top:1077px;font-size:25.25px;line-height:25.25px;color:#666666;letter-spacing:0.049px;">1,350</span>
<span class="t" style="left:706.18px;top:916px;font-size:25.25px;line-height:25.25px;color:#666666;letter-spacing:0.049px;">1,800</span>
<span class="t" style="left:3098.70px;top:1553px;font-size:33.25px;line-height:33.25px;color:#666666;letter-spacing:0.769px;">0k €</span>
<span class="t" style="left:3098.67px;top:1393px;font-size:33.25px;line-height:33.25px;color:#666666;letter-spacing:0.639px;">50k €</span>
<span class="t" style="left:3097.47px;top:1232px;font-size:33.25px;line-height:33.25px;color:#666666;letter-spacing:-0.029px;">100k €</span>
<span class="t" style="left:3097.47px;top:1072px;font-size:33.25px;line-height:33.25px;color:#666666;letter-spacing:-0.089px;">150k €</span>
<span class="t" style="left:3098.34px;top:911px;font-size:33.25px;line-height:33.25px;color:#666666;letter-spacing:0.538px;">200k €</span>
<span class="t" style="left:733.63px;top:1583px;font-size:24.50px;line-height:24.50px;color:#666666;letter-spacing:0.652px;">Jan 2025</span>
<span class="t" style="left:1360.13px;top:1583px;font-size:24.50px;line-height:24.50px;color:#666666;letter-spacing:0.803px;">Apr 2025</span>
<span class="t" style="left:1990.00px;top:1583px;font-size:24.50px;line-height:24.50px;color:#666666;letter-spacing:0.676px;">Jul 2025</span>
<span class="t" style="left:2610.89px;top:1583px;font-size:24.50px;line-height:24.50px;color:#666666;letter-spacing:1.103px;">Oct 2025</span>
<span class="t" style="left:1787.71px;top:1639px;font-size:32.75px;line-height:32.75px;color:#8884d8;letter-spacing:-0.412px;">Revenue (€)</span>
<span class="t" style="left:2019.48px;top:1639px;font-size:32.75px;line-height:32.75px;color:#10b981;letter-spacing:0.269px;">Units</span>
<span class="t" style="left:0;top:0;font-size:34.00px;line-height:34.00px;color:#808080;letter-spacing:-0.407px;transform-origin:0 0;transform:translate(647.700px,1284px) rotate(-90deg) translate(-2.62px,-29px);">Units</span>
<span class="t" style="left:0;top:0;font-size:34.25px;line-height:34.25px;color:#808080;letter-spacing:-1.395px;transform-origin:0 0;transform:translate(3221.500px,1164px) rotate(90deg) translate(-2.81px,-29px);">Revenue (€)</span>
</section>
<section>
<div class="card" style="left:496px;top:1770px;width:2876px;height:200px"></div>
<div class="ask"></div>
<svg class="i" style="left:3057px;top:1704px;" width="32" height="32" viewBox="0 0 24 24" fill="none" stroke="#ffffff" stroke-width="2" stroke-linecap="round" stroke-linejoin="round"><path d="M11.017 2.814a1 1 0 0 1 1.966 0l1.051 5.558a2 2 0 0 0 1.594 1.594l5.558 1.051a1 1 0 0 1 0 1.966l-5.558 1.051a2 2 0 0 0-1.594 1.594l-1.051 5.558a1 1 0 0 1-1.966 0l-1.051-5.558a2 2 0 0 0-1.594-1.594l-5.558-1.051a1 1 0 0 1 0-1.966l5.558-1.051a2 2 0 0 0 1.594-1.594z"/><path d="M20 2v4"/><path d="M22 4h-4"/><circle cx="4" cy="20" r="2"/></svg>
<span class="t" style="left:3122.74px;top:1706px;font-size:28.75px;line-height:28.75px;color:#ffffff;letter-spacing:0.377px;-webkit-text-stroke:0.5px #ffffff;">Ask Strathens AI</span>
</section>
</main>
</div>
<script>(function(){var w=window.innerWidth;if(w&&Math.abs(w-3420)>2){var r=document.getElementById("root");r.style.transformOrigin="0 0";r.style.transform="translateZ(0) scale("+(w/3420)+")";}})();</script>
</body></html>
